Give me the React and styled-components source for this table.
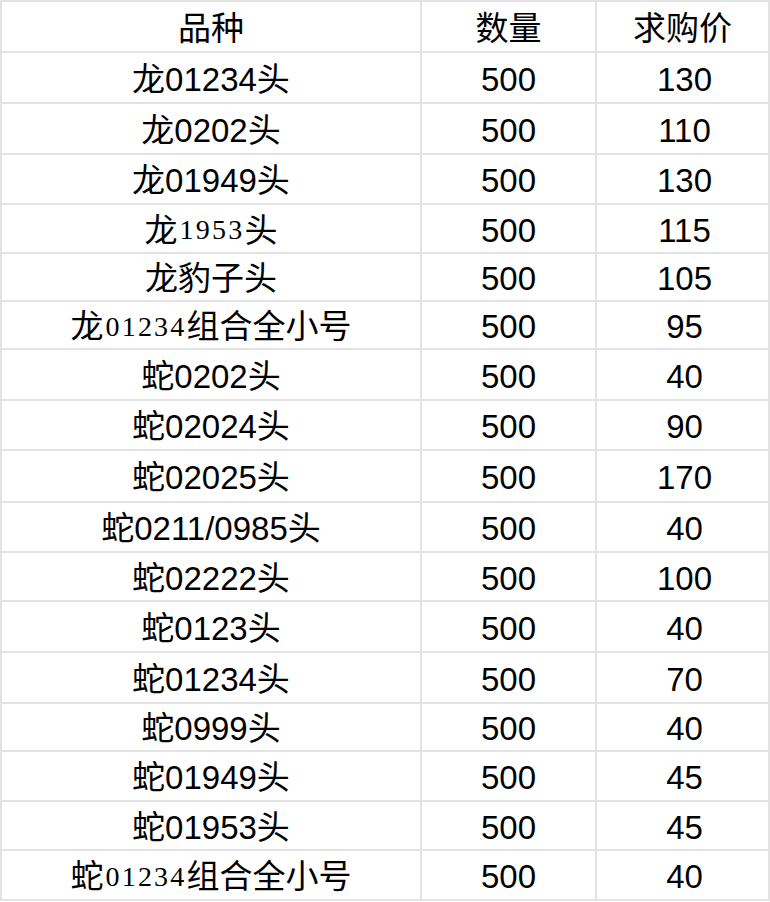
import styled, { createGlobalStyle } from "styled-components";

const GlobalStyle = createGlobalStyle`
  html, body {
    margin: 0;
    padding: 0;
    background: #ffffff;
  }
`;

// heights of each row, header first (the grid lines are the 2px gaps)
const rowHeights = [49, 49, 49, 48, 47, 46, 46, 49, 48, 50, 48, 47, 49, 49, 46, 48, 47, 48];

const rows = [
  { name: "龙01234头", qty: 500, price: 130 },
  { name: "龙0202头", qty: 500, price: 110 },
  { name: "龙01949头", qty: 500, price: 130 },
  { name: "龙1953头", qty: 500, price: 115, serif: true },
  { name: "龙豹子头", qty: 500, price: 105 },
  { name: "龙01234组合全小号", qty: 500, price: 95, serif: true },
  { name: "蛇0202头", qty: 500, price: 40 },
  { name: "蛇02024头", qty: 500, price: 90 },
  { name: "蛇02025头", qty: 500, price: 170 },
  { name: "蛇0211/0985头", qty: 500, price: 40 },
  { name: "蛇02222头", qty: 500, price: 100 },
  { name: "蛇0123头", qty: 500, price: 40 },
  { name: "蛇01234头", qty: 500, price: 70 },
  { name: "蛇0999头", qty: 500, price: 40 },
  { name: "蛇01949头", qty: 500, price: 45 },
  { name: "蛇01953头", qty: 500, price: 45 },
  { name: "蛇01234组合全小号", qty: 500, price: 40, serif: true },
];

const Sheet = styled.div`
  box-sizing: border-box;
  width: 770px;
  display: grid;
  grid-template-columns: 418px 173px 171px;
  grid-template-rows: ${rowHeights.map((h) => `${h}px`).join(" ")};
  gap: 2px;
  padding: 2px;
  background: #e3e3e3;
  font-family: "Liberation Sans", "Noto Sans CJK SC", sans-serif;
  font-size: 33px;
  color: #000000;
`;

const Cell = styled.div`
  box-sizing: border-box;
  background: #ffffff;
  display: flex;
  align-items: center;
  justify-content: center;
  white-space: nowrap;
  line-height: 1;
  padding-top: 3px;
  padding-left: ${(p) => (p.$shift ? "4px" : "0")};
`;

const SerifDigits = styled.span`
  font-family: "Liberation Serif", serif;
  font-size: 28px;
  letter-spacing: 2.2px;
  margin-left: 2px;
`;

const renderName = (name, serif) => {
  if (!serif) return name;
  return name.split(/(\d+)/).map((part, i) =>
    /^\d+$/.test(part) ? <SerifDigits key={i}>{part}</SerifDigits> : part
  );
};

const App = () => {
  return (
    <>
      <GlobalStyle />
      <Sheet>
        <Cell>品种</Cell>
        <Cell>数量</Cell>
        <Cell>求购价</Cell>
        {rows.map((row) => (
          <>
            <Cell key={row.name + "n"}>{renderName(row.name, row.serif)}</Cell>
            <Cell key={row.name + "q"}>{row.qty}</Cell>
            <Cell key={row.name + "p"} $shift>
              {row.price}
            </Cell>
          </>
        ))}
      </Sheet>
    </>
  );
};

export default App;
